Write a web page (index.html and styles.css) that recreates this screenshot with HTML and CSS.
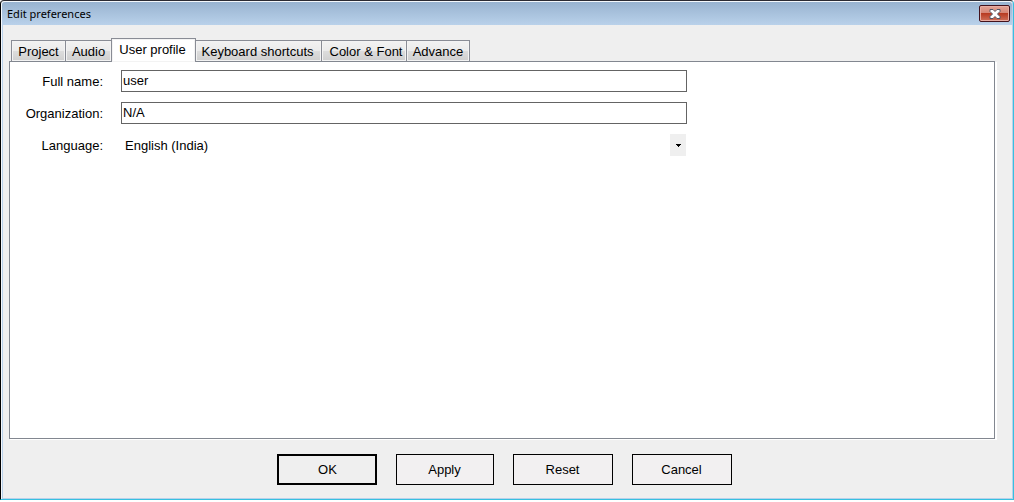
FILE: index.html
```html
<!DOCTYPE html>
<html lang="en">
<head>
<meta charset="utf-8">
<title>Edit preferences</title>
<link rel="stylesheet" href="styles.css">
</head>
<body>
<div class="window">
  <header class="titlebar">
    <h1 class="title">Edit preferences</h1>
    <button class="close" type="button" aria-label="Close">
      <svg width="12" height="10" viewBox="0 0 12 10" aria-hidden="true">
        <path d="M1 .5h3l2 2 2-2h3v2L8.500 5 11 7.500v2H8l-2-2-2 2H1v-2L3.500 5 1 2.500z" fill="#fff" stroke="#535666"/>
      </svg>
    </button>
  </header>
  <form class="content">
    <div class="tabs" role="tablist">
      <button class="tab" type="button" role="tab">Project</button>
      <button class="tab tab-narrow" type="button" role="tab">Audio</button>
      <button class="tab tab-selected" type="button" role="tab" aria-selected="true">User profile</button>
      <button class="tab tab-wide" type="button" role="tab">Keyboard shortcuts</button>
      <button class="tab tab-medium" type="button" role="tab">Color &amp; Font</button>
      <button class="tab tab-last" type="button" role="tab">Advance</button>
    </div>
    <div class="panel" role="tabpanel">
      <div class="row">
        <label class="label" for="name">Full name:</label>
        <input class="field" id="name" type="text" value="user">
      </div>
      <div class="row">
        <label class="label" for="org">Organization:</label>
        <input class="field" id="org" type="text" value="N/A">
      </div>
      <div class="row">
        <label class="label" for="lang">Language:</label>
        <div class="picker">
          <select class="select" id="lang"><option>English (India)</option></select>
          <span class="arrow"><svg width="5" height="3" viewBox="0 0 5 3" shape-rendering="crispEdges" aria-hidden="true"><path d="M0 0h5v1H4v1H3v1H2V2H1V1H0z"/></svg></span>
        </div>
      </div>
    </div>
    <div class="actions">
      <button class="button button-default" type="submit">OK</button>
      <button class="button button-apply" type="button">Apply</button>
      <button class="button" type="reset">Reset</button>
      <button class="button" type="button">Cancel</button>
    </div>
  </form>
</div>
</body>
</html>
```
FILE: styles.css
```css
* { box-sizing: border-box; }
body {
  margin: 0;
  background: #fff;
  color: #000;
  font: 13px/16px "Liberation Sans", Arial, sans-serif;
}
button, input, select { font: inherit; color: inherit; }
.window {
  height: calc(100vh - 2px);
  display: flex;
  flex-direction: column;
  background: #efefef;
  border: 1px solid #36c0e0;
  border-top-color: #2b2b33;
  border-left-color: #000;
  border-radius: 4px 4px 0 0;
  box-shadow: inset 1px 1px #f4f8fc, inset -1px -1px #b9d1ea, inset 2px 0 #b9d1ea;
}
.titlebar {
  display: flex;
  justify-content: space-between;
  height: 23px;
  margin: 1px 1px 0;
  padding: 0 2px 0 5px;
  background: linear-gradient(#98b3d0, #b9d1ea);
  border-radius: 3px 3px 0 0;
}
.title {
  margin: 4px 0 0;
  font: 11px/16px "Noto Sans", "Open Sans", sans-serif;
}
.close {
  display: flex;
  align-items: center;
  justify-content: center;
  width: 31px;
  height: 17px;
  margin-top: 3px;
  padding: 0;
  border: 1px solid #43121c;
  border-radius: 2px;
  background: linear-gradient(#e3a396, #d58474 48%, #b83b22 50%, #d0705a);
  box-shadow: inset 0 0 0 1px #e8aca2;
}
.content {
  flex: 1;
  display: flex;
  flex-direction: column;
  padding: 13px 18px 14px 8px;
}
.tabs {
  display: flex;
  align-items: flex-end;
  height: 24px;
  margin-bottom: -1px;
  padding-left: 2px;
}
.tab {
  width: 54px;
  height: 22px;
  padding: 2px 0 0;
  border: 1px solid #898c95;
  border-right: 0;
  background: linear-gradient(#f2f2f2, #ebebeb 48%, #dddddd 50%, #cfcfcf);
  box-shadow: inset 0 0 0 1px #f3f3f3;
  white-space: nowrap;
}
.tab-narrow { width: 46px; }
.tab-selected {
  width: 85px;
  height: 24px;
  padding: 0 2px 1px 0;
  border-right: 1px solid #898c95;
  border-bottom: 0;
  background: #fff;
  z-index: 1;
}
.tab-wide { width: 125px; padding-right: 2px; border-left: 0; }
.tab-medium { width: 85px; padding-left: 4px; }
.tab-last { width: 64px; border-right: 1px solid #898c95; }
.panel {
  flex: 1;
  display: flex;
  flex-direction: column;
  gap: 10px;
  padding: 8px;
  background: #fff;
  border: 1px solid #828790;
  box-shadow: 1px 1px #fff, 2px 1px #fff;
}
.row { display: flex; align-items: center; }
.label {
  width: 85px;
  margin-right: 18px;
  padding-top: 2px;
  text-align: right;
}
.field, .picker {
  width: 58.5%;
  height: 22px;
}
.field {
  padding: 0 1px 2px;
  border: 1px solid #646464;
  background: #fff;
}
.picker { display: flex; position: relative; }
.select {
  flex: 1;
  padding: 2px 20px 0 4px;
  border: 0;
  appearance: none;
  background: #fff;
}
.arrow {
  position: absolute;
  right: 1px;
  top: 0;
  display: flex;
  align-items: center;
  justify-content: center;
  width: 16px;
  height: 22px;
  background: #efefef;
  pointer-events: none;
}
.actions {
  display: flex;
  justify-content: center;
  gap: 19px;
  padding: 15px 0 0 4px;
}
.button {
  width: 100px;
  height: 31px;
  padding: 0;
  border: 1px solid #000;
  background: #f2f0f1;
}
.button-default { padding-left: 2px; border-width: 2px; background: #efefef; }
.button-apply { width: 98px; }
```
